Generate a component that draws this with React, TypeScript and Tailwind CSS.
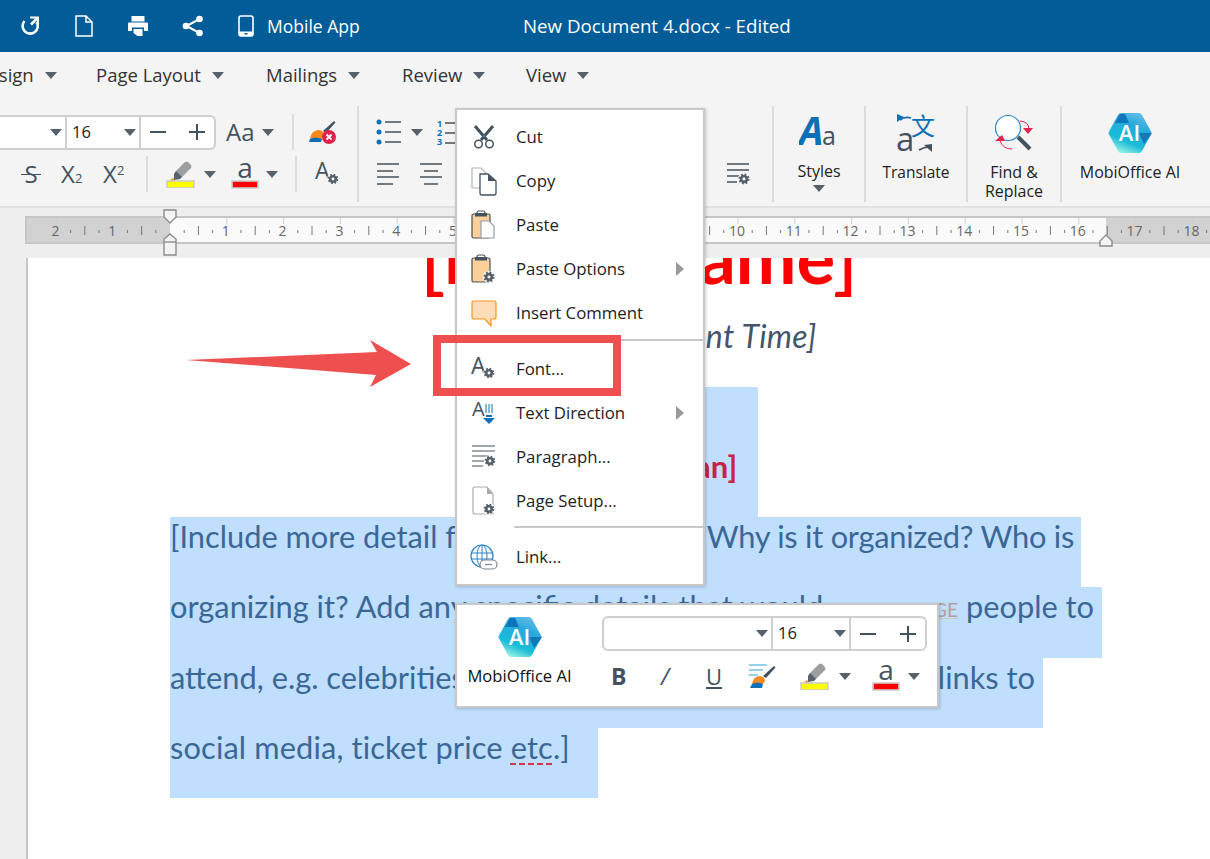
import React from "react";

function Caret({ className = "", color = "#56616b" }: { className?: string; color?: string }) {
  return (
    <svg width="12" height="7" viewBox="0 0 12 7" className={`shrink-0 ${className}`}>
      <polygon points="0,0 12,0 6,7" fill={color} />
    </svg>
  );
}

function Gear({ cx, cy, r = 3.6, color = "#56616b" }: { cx: number; cy: number; r?: number; color?: string }) {
  const tr = r * 1.15;
  const teeth = (2 * Math.PI * tr) / 16;
  return (
    <g>
      <circle cx={cx} cy={cy} r={r + 2.2} fill="#fff" opacity="0.85" />
      <circle cx={cx} cy={cy} r={r * 0.72} fill="none" stroke={color} strokeWidth={r * 0.7} />
      <circle cx={cx} cy={cy} r={tr} fill="none" stroke={color} strokeWidth={r * 0.5} strokeDasharray={`${teeth} ${teeth}`} />
    </g>
  );
}

function Hex({ id, w = 44, h = 40 }: { id: string; w?: number; h?: number }) {
  return (
    <svg width={w} height={h} viewBox="0 0 44 40">
      <defs>
        <linearGradient id={id} x1="0.25" y1="1" x2="0.7" y2="0">
          <stop offset="0" stopColor="#9ff5e2" />
          <stop offset="0.3" stopColor="#19bcd8" />
          <stop offset="0.7" stopColor="#29a9dc" />
          <stop offset="1" stopColor="#62bde6" />
        </linearGradient>
      </defs>
      <path d="M1 18.500 10 2Q11 0 13 0H31Q33 0 34 2L43 18.500Q44 20 43 21.500L34 38Q33 40 31 40H13Q11 40 10 38L1 21.500Q0 20 1 18.500Z" fill={`url(#${id})`} />
      <polygon points="12,1 17,1 21,10 7,10" fill="#0f76bb" />
      <polygon points="31,20 44,20 36,31" fill="#1477b8" />
      <text x="21.500" y="28" textAnchor="middle" fontFamily="Open Sans" fontWeight="600" fontSize="22" fill="#fff">AI</text>
    </svg>
  );
}

function HighlighterIcon() {
  return (
    <svg width="30" height="28" viewBox="0 0 30 28">
      <path d="M10 11 19 2q2-1 3 0l3 3q1 2 0 3l-9 9-7 1z" fill="#9b9fa1" />
      <path d="M10 11 16 17l-2 2-6 1 0-6z" fill="#56616b" />
      <polygon points="3,21 7,18 9,21" fill="#f7891f" />
      <rect x="1" y="21" width="27" height="7" fill="#ffff00" stroke="#cdcdcd" strokeWidth="1.600" />
    </svg>
  );
}

function FontColorIcon() {
  return (
    <svg width="28" height="30" viewBox="0 0 28 30">
      <text x="14" y="19" textAnchor="middle" fontFamily="Open Sans" fontSize="28" fill="#44525e">a</text>
      <rect x="1" y="22" width="26" height="7" fill="#ff0000" stroke="#cdcdcd" strokeWidth="1.600" />
    </svg>
  );
}

function FontBox({ w1, w2, w3, h, leftOpen }: { w1: number; w2: number; w3: number; h: number; leftOpen?: boolean }) {
  return (
    <div
      className={`flex shrink-0 items-center bg-white border-2 border-[#cfcfcf] ${leftOpen ? "rounded-r-md border-l-0" : "rounded-md"}`}
      style={{ height: h }}
    >
      <div className="flex items-center justify-end h-full pr-[3px]" style={{ width: w1 }}>
        <Caret />
      </div>
      <div className="flex items-center justify-between h-full border-l-2 border-[#cfcfcf] pl-[5px] pr-[3px] text-[16.500px] text-[#222]" style={{ width: w2 }}>
        <span>16</span>
        <Caret />
      </div>
      <div className="flex items-center justify-between h-full border-l-2 border-[#cfcfcf] px-[9px]" style={{ width: w3 }}>
        <div className="w-[16px] h-[2px] bg-[#44525e]" />
        <svg width="16" height="16" viewBox="0 0 16 16">
          <path d="M0 8H16M8 0V16" stroke="#44525e" strokeWidth="2" />
        </svg>
      </div>
    </div>
  );
}

function Sep({ className = "" }: { className?: string }) {
  return <div className={`w-[2px] shrink-0 bg-[#dcdcdc] ${className}`} />;
}

function TitleBar() {
  return (
    <div className="flex items-center h-[52px] shrink-0 bg-[#025c98] text-white">
      <svg width="20" height="20" viewBox="0 0 20 20" className="ml-[20px]" fill="none" stroke="#fff" strokeWidth="2.600">
        <path d="M4.500 5A7.600 7.600 0 1 0 16.600 6" />
        <path d="M10 1.500H18V9.500" strokeWidth="2" />
        <path d="M17.500 2 11 8.500" strokeWidth="2.600" />
      </svg>
      <svg width="18" height="22" viewBox="0 0 18 22" className="ml-[35px]" fill="none" stroke="#fff" strokeWidth="1.500">
        <path d="M1 1H11L17 7V21H1Z" />
        <path d="M11 1V7H17" />
      </svg>
      <svg width="20" height="20" viewBox="0 0 20 20" className="ml-[35px]" fill="#fff">
        <rect x="3.500" y="0" width="13" height="5.500" />
        <path d="M1 6.500H19a1 1 0 0 1 1 1V15H16V11.500H4V15H0V7.500a1 1 0 0 1 1-1Z" />
        <path d="M5.500 13H14.500V20H9.500L5.500 17Z" />
      </svg>
      <svg width="22" height="22" viewBox="0 0 22 22" className="ml-[34px]" fill="#fff" stroke="#fff">
        <path d="M17.500 4 4.500 11l13 7" fill="none" strokeWidth="2" />
        <circle cx="17.500" cy="4" r="3.300" stroke="none" />
        <circle cx="4" cy="11" r="3.300" stroke="none" />
        <circle cx="17.500" cy="18" r="3.300" stroke="none" />
      </svg>
      <svg width="16" height="22" viewBox="0 0 16 22" className="ml-[34px]" fill="none">
        <rect x="1" y="1" width="14" height="20" rx="2" stroke="#fff" strokeWidth="1.600" />
        <rect x="1" y="16.500" width="14" height="4.500" fill="#fff" />
        <rect x="6.500" y="18" width="3" height="1.500" fill="#025c98" />
      </svg>
      <span className="ml-[13px] text-[17.500px] w-[256px] whitespace-nowrap">Mobile App</span>
      <span className="text-[18.700px] whitespace-nowrap">New Document 4.docx - Edited</span>
    </div>
  );
}

const tabs = [
  { label: "Design", cls: "w-[121px] -ml-[25px]" },
  { label: "Page Layout", cls: "w-[170px]" },
  { label: "Mailings", cls: "w-[136px]" },
  { label: "Review", cls: "w-[124px]" },
  { label: "View", cls: "w-[80px]" },
];

function Tabs() {
  return (
    <div className="flex items-center h-[48px] shrink-0 bg-[#f4f4f4] text-[18.500px] text-[#333] pb-[2px]">
      {tabs.map((t) => (
        <div key={t.label} className={`flex items-center gap-[11px] shrink-0 whitespace-nowrap ${t.cls}`}>
          <span>{t.label}</span>
          <Caret />
        </div>
      ))}
    </div>
  );
}

function Ribbon() {
  return (
    <div className="flex h-[108px] shrink-0 bg-[#f4f4f4] border-b-2 border-[#e2e2e2] pt-[6px]">
      <div className="w-[357px] shrink-0 pt-[8px]">
        <div className="flex items-center h-[36px]">
          <div className="-ml-[10px]">
            <FontBox w1={75} w2={74} w3={75} h={35} leftOpen />
          </div>
          <span className="ml-[10px] text-[24px] text-[#44525e] leading-none">Aa</span>
          <Caret className="ml-[7px]" />
          <Sep className="h-[36px] ml-[18px]" />
          <svg width="28" height="26" viewBox="0 0 28 26" className="ml-[15px]">
            <path d="M14 12 25 2l1.500 1.500L17 14z" fill="#44525e" />
            <path d="M1 20q1-8 8-9 5 0 6 4l-2 5z" fill="#f7891f" />
            <path d="M1 20q5-3 12 0l-1 3H0z" fill="#0f6fb5" />
            <circle cx="20" cy="18" r="7" fill="#e0224d" />
            <path d="M17.500 15.500l5 5m0-5-5 5" stroke="#fff" strokeWidth="1.800" />
          </svg>
        </div>
        <div className="flex items-center h-[36px] mt-[6px] text-[#44525e]">
          <span className="relative ml-[22px] w-[18px] text-[24px] leading-none text-center">
            S
            <span className="absolute left-[-1px] right-[-1px] top-[12px] h-[1px] bg-[#44525e]" />
          </span>
          <span className="ml-[21px] w-[24px] text-[24px] leading-none whitespace-nowrap">
            X<span className="text-[13px]">2</span>
          </span>
          <span className="ml-[18px] w-[24px] text-[24px] leading-none whitespace-nowrap">
            X<span className="text-[13px] align-[8px]">2</span>
          </span>
          <Sep className="h-[36px] ml-[19px]" />
          <div className="ml-[18px]"><HighlighterIcon /></div>
          <Caret className="ml-[8px]" />
          <div className="ml-[15px]"><FontColorIcon /></div>
          <Caret className="ml-[7px]" />
          <Sep className="h-[36px] ml-[17px]" />
          <svg width="24" height="24" viewBox="0 0 24 24" className="ml-[18px]">
            <text x="0" y="17" fontFamily="Open Sans" fontSize="23" fill="#44525e">A</text>
            <Gear cx={18} cy={17} r={3.800} />
          </svg>
        </div>
      </div>
      <Sep className="h-[96px]" />
      <div className="w-[413px] shrink-0 pt-[8px]">
        <div className="flex items-center h-[36px]">
          <svg width="26" height="26" viewBox="0 0 26 26" className="ml-[17px]">
            <circle cx="3" cy="3" r="2.500" fill="#0f6fb5" />
            <circle cx="3" cy="13" r="2.500" fill="#0f6fb5" />
            <circle cx="3" cy="23" r="2.500" fill="#0f6fb5" />
            <path d="M9 3H25M9 13H25M9 23H25" stroke="#44525e" strokeWidth="1.400" />
          </svg>
          <Caret className="ml-[9px]" />
          <svg width="20" height="26" viewBox="0 0 20 26" className="ml-[14px]">
            <text x="0" y="8" fontFamily="Open Sans" fontWeight="700" fontSize="9" fill="#0f6fb5">1</text>
            <text x="0" y="17" fontFamily="Open Sans" fontWeight="700" fontSize="9" fill="#0f6fb5">2</text>
            <text x="0" y="26" fontFamily="Open Sans" fontWeight="700" fontSize="9" fill="#0f6fb5">3</text>
            <path d="M8 4H20M8 14H20M8 24H20" stroke="#44525e" strokeWidth="1.400" />
          </svg>
        </div>
        <div className="flex items-center h-[36px] mt-[6px]">
          <svg width="23" height="22" viewBox="0 0 23 22" className="ml-[18px]">
            <path d="M0 1H22M0 8H16M0 14H22M0 21H16" stroke="#44525e" strokeWidth="1.300" />
          </svg>
          <svg width="23" height="22" viewBox="0 0 23 22" className="ml-[20px]">
            <path d="M0 1H22M4 8H18M0 14H22M4 21H18" stroke="#44525e" strokeWidth="1.300" />
          </svg>
          <svg width="24" height="23" viewBox="0 0 24 23" className="ml-[283px]">
            <path d="M1 1H23M1 7H23M1 13H15M1 19H11" stroke="#44525e" strokeWidth="1.300" />
            <Gear cx={18} cy={16} r={4} />
          </svg>
        </div>
      </div>
      <Sep className="h-[96px]" />
      <div className="w-[90px] shrink-0 flex flex-col items-center text-[16px] text-[#222]">
        <svg width="40" height="32" viewBox="0 0 40 32" className="mt-[10px]">
          <text x="0" y="29" fontFamily="Open Sans" fontStyle="italic" fontWeight="700" fontSize="39" fill="#0f6fb5">A</text>
          <text x="23" y="29" fontFamily="Open Sans" fontSize="25" fill="#44525e">a</text>
        </svg>
        <span className="mt-[12px] leading-[22px]">Styles</span>
        <Caret className="mt-[3px]" />
      </div>
      <Sep className="h-[96px]" />
      <div className="w-[100px] shrink-0 flex flex-col items-center text-[15.500px] text-[#222]">
        <svg width="38" height="38" viewBox="0 0 38 38" className="mt-[8px]">
          <text x="14" y="21" fontFamily="Noto Sans CJK SC" fontSize="24" fill="#0f6fb5">文</text>
          <path d="M3 6q5-4 11-2" fill="none" stroke="#0f6fb5" strokeWidth="1.700" />
          <polygon points="0,1 7,4 0,9" fill="#0f6fb5" transform="translate(0 -1)" />
          <text x="-1" y="37" fontFamily="Open Sans" fontSize="33" fill="#44525e">a</text>
          <path d="M22 36q5-3 10-3" fill="none" stroke="#44525e" strokeWidth="1.700" />
          <polygon points="35,38 27,31 35,30" fill="#44525e" />
        </svg>
        <span className="mt-[9px] leading-[22px]">Translate</span>
      </div>
      <Sep className="h-[96px]" />
      <div className="w-[92px] shrink-0 flex flex-col items-center text-[16px] text-[#222]">
        <svg width="40" height="38" viewBox="0 0 40 38" className="mt-[8px]">
          <circle cx="14" cy="14" r="12.500" fill="#fff" stroke="#2b85c9" strokeWidth="1.200" />
          <path d="M24 23 36 35" stroke="#44525e" strokeWidth="4" />
          <path d="M26 7q9 1 9 8" fill="none" stroke="#e0224d" strokeWidth="1" />
          <polygon points="29,14 39,14 34,20" fill="#e0224d" />
          <path d="M6 27q3 8 12 8" fill="none" stroke="#e0224d" strokeWidth="1" />
          <polygon points="1,27 11,27 8,21" fill="#e0224d" />
        </svg>
        <span className="mt-[11px] leading-[19px] text-center whitespace-nowrap">Find &amp;<br />Replace</span>
      </div>
      <Sep className="h-[96px]" />
      <div className="flex-1 flex flex-col items-center text-[16px] text-[#222] pr-[12px]">
        <div className="mt-[7px] leading-[0]"><Hex id="hexTop" /></div>
        <span className="mt-[8px] leading-[22px] whitespace-nowrap">MobiOffice AI</span>
      </div>
    </div>
  );
}

function Ruler() {
  const unit = 56.8;
  const origin = 145;
  const nums = Array.from({ length: 22 }, (_, i) => i - 2);
  return (
    <div className="relative h-[50px] shrink-0 bg-[#eeeeee] pt-[8px] pl-[25px]">
      <div className="flex h-[28px] border-y-2 border-[#c6c6c6] border-l-2 bg-[#fafafa]">
        <div className="w-[143px] shrink-0 bg-[#d2d2d2]" />
        <div className="w-[936px] shrink-0" />
        <div className="flex-1 bg-[#d2d2d2]" />
      </div>
      <svg width="1185" height="50" viewBox="0 0 1185 50" className="absolute left-[25px] top-0">
        {nums.map((n) => {
          if (n === 0) return null;
          const x = origin + n * unit;
          return (
            <g key={n}>
              <path d={`M${x} 10V16`} stroke="#cfcfcf" strokeWidth="1" />
              <text x={x - 1} y="28" textAnchor="middle" fontFamily="Open Sans" fontSize="14" fill="#666">{Math.abs(n)}</text>
            </g>
          );
        })}
        {Array.from({ length: 88 }, (_, i) => i - 8).map((q) => {
          if (q % 4 === 0) return null;
          const x = origin + (q * unit) / 4;
          const tall = q % 2 === 0;
          return <path key={q} d={tall ? `M${x} 18V27` : `M${x} 22V25`} stroke="#777" strokeWidth="1" />;
        })}
        <path d="M139 2H151V9L145 15 139 9Z" fill="#f4f4f4" stroke="#8c8c8c" strokeWidth="1.400" />
        <path d="M145 26 151 31V47H139V31Z" fill="#f4f4f4" stroke="#8c8c8c" strokeWidth="1.400" />
        <path d="M139 34H151" stroke="#8c8c8c" strokeWidth="1.400" />
        <path d="M1081 27 1087 33V38H1075V33Z" fill="#f4f4f4" stroke="#8c8c8c" strokeWidth="1.400" />
      </svg>
    </div>
  );
}

function Document() {
  const line = "h-[70.300px] flex items-center justify-between bg-[#c0dffe] whitespace-nowrap overflow-hidden pb-[30px]";
  const clip = "flex-1 min-w-0 overflow-hidden";
  return (
    <div className="flex flex-1 min-h-0 overflow-hidden bg-white">
      <div className="w-[26px] shrink-0 bg-[#eeeeee]" />
      <div className="w-[2px] shrink-0 bg-[#c6c6c6]" />
      <div className="flex-1 pl-[142px] text-[#3b6796] font-['Lato']">
        <div className="w-[938px] flex flex-col items-center">
          <div className="h-[52px] flex items-end">
            <div className="text-[72.500px] font-bold text-[#ff0000] leading-[86px] whitespace-nowrap mb-[11px]">
              <span className="text-[88px] font-normal leading-[0] -mx-[3px]">[</span>
              Event Name
              <span className="text-[88px] font-normal leading-[0] -mx-[3px]">]</span>
            </div>
          </div>
          <div className="mt-[5px] h-[42px] text-[32px] tracking-[0.3px] italic text-[#44546a] leading-[42px] whitespace-nowrap">[Event Date &amp; Event Time]</div>
          <div className="mt-[30px] w-[238px] h-[130px] bg-[#c0dffe] flex justify-center pt-[58px]">
            <span className="text-[31px] font-bold text-[#c4264a] leading-[42px] whitespace-nowrap">[Event Slogan]</span>
          </div>
        </div>
        <div className="text-[30.800px]">
          <div className={`${line} w-[911px] pr-[7px]`}>
            <span className={clip}>[Include more detail for</span>
            <span className="shrink-0 tracking-[-0.25px]">Why is it organized? Who is</span>
          </div>
          <div className={`${line} w-[932px] pr-[8px]`}>
            <span className={clip}>organizing it? Add any specific details that would</span>
            <span className="shrink-0 flex items-center gap-[8px]">
              <span className="mt-[6px] text-[19px] text-[#b59e9a] underline decoration-[#c9c9c9]">ENCOURAGE</span>
              <span>people to</span>
            </span>
          </div>
          <div className={`${line} w-[873px] pr-[8px]`}>
            <span className={clip}>attend, e.g. celebrities</span>
            <span className="shrink-0">links to</span>
          </div>
          <div className={`${line} w-[428px]`}>
            <span className="tracking-[0.13px]">
              social media, ticket price{" "}
              <span className="underline decoration-dashed decoration-[#d9344f] decoration-[1.500px] underline-offset-[5px]">etc</span>
              .]
            </span>
          </div>
        </div>
      </div>
    </div>
  );
}

function MenuRow({ icon, label, sub }: { icon: React.ReactNode; label: string; sub?: boolean }) {
  return (
    <div className="flex items-center h-[44px] pl-[12px] pr-[19px] text-[16.800px] text-[#222]">
      <div className="w-[30px] h-[28px] flex items-center justify-center shrink-0">{icon}</div>
      <span className="ml-[17px] flex-1 whitespace-nowrap">{label}</span>
      {sub && (
        <svg width="8" height="14" viewBox="0 0 8 14"><polygon points="0,0 8,7 0,14" fill="#9a9a9a" /></svg>
      )}
    </div>
  );
}

function ClipBoard({ gear }: { gear?: boolean }) {
  return (
    <svg width="26" height="30" viewBox="0 0 26 30">
      <rect x="1" y="4" width="18" height="24" rx="1.500" fill="#fdd09b" stroke="#44525e" strokeWidth="1.200" />
      <path d="M6 5V2.500Q6 1 8 1H12Q14 1 14 2.500V5Z" fill="#fff" stroke="#44525e" strokeWidth="1.200" />
      <rect x="4" y="3" width="12" height="3.500" fill="#44525e" />
      {gear ? (
        <Gear cx={18} cy={23} r={4} />
      ) : (
        <path d="M10 11H18L23 16V28H10Z" fill="#fff" stroke="#9a9fa3" strokeWidth="1.200" />
      )}
    </svg>
  );
}

function ContextMenu() {
  return (
    <div className="absolute left-[455px] top-[108px] w-[250px] h-[478px] bg-white border-[2.500px] border-[#c8c8c8] shadow-[1px_1px_3px_rgba(0,0,0,0.2)] pt-[5px]">
      <MenuRow label="Cut" icon={
        <svg width="22" height="24" viewBox="0 0 22 24" fill="none">
          <path d="M2 1 14 15" stroke="#44525e" strokeWidth="3" />
          <path d="M20 1 8 15" stroke="#44525e" strokeWidth="3" />
          <circle cx="5.500" cy="19" r="3.800" stroke="#44525e" strokeWidth="1.500" />
          <circle cx="16.500" cy="19" r="3.800" stroke="#44525e" strokeWidth="1.500" />
          <circle cx="11" cy="11" r="1" fill="#2b9bd8" />
        </svg>
      } />
      <MenuRow label="Copy" icon={
        <svg width="27" height="29" viewBox="0 0 27 29" fill="none">
          <path d="M1 1H10L15 6V21H1Z" stroke="#b0b4b7" strokeWidth="1.200" fill="#fff" />
          <path d="M9 7H17L25 14V26Q25 28 23 28H11Q9 28 9 26Z" fill="#fff" stroke="#44525e" strokeWidth="1.300" />
          <path d="M17 7 25 14H17Z" fill="#44525e" />
        </svg>
      } />
      <MenuRow label="Paste" icon={<ClipBoard />} />
      <MenuRow label="Paste Options" sub icon={<ClipBoard gear />} />
      <MenuRow label="Insert Comment" icon={
        <svg width="26" height="27" viewBox="0 0 26 27">
          <path d="M3 1H23Q25 1 25 3V17Q25 19 23 19H20V26L14 19H3Q1 19 1 17V3Q1 1 3 1Z" fill="#fddcb8" stroke="#f7941d" strokeWidth="1.200" />
        </svg>
      } />
      <div className="h-[12px] flex items-start pt-[4px] pl-[57px]"><div className="w-full h-[2px] bg-[#c8c8c8]" /></div>
      <MenuRow label="Font..." icon={
        <svg width="26" height="24" viewBox="0 0 26 24">
          <text x="0" y="17" fontFamily="Open Sans" fontSize="23" fill="#44525e">A</text>
          <Gear cx={18} cy={16} r={3.800} />
        </svg>
      } />
      <MenuRow label="Text Direction" sub icon={
        <svg width="24" height="24" viewBox="0 0 24 24">
          <text x="0" y="15" fontFamily="Open Sans" fontSize="20" fill="#44525e">A</text>
          <path d="M14 3V12M17 3V12M20 3V12" stroke="#0f6fb5" strokeWidth="1" />
          <path d="M14 15H20" stroke="#0f6fb5" strokeWidth="2" />
          <polygon points="11,17 23,17 17,23" fill="#0f6fb5" />
        </svg>
      } />
      <MenuRow label="Paragraph..." icon={
        <svg width="26" height="24" viewBox="0 0 26 24">
          <path d="M1 1H24M1 6H24M1 11H18M1 16H13M1 21H12" stroke="#44525e" strokeWidth="1.200" />
          <Gear cx={19} cy={16} r={3.800} />
        </svg>
      } />
      <MenuRow label="Page Setup..." icon={
        <svg width="24" height="30" viewBox="0 0 24 30">
          <path d="M3 1H15L21 8V28H3Q1 28 1 26V3Q1 1 3 1Z" fill="#fff" stroke="#a8acaf" strokeWidth="1.200" />
          <path d="M15 1 21 8H15Z" fill="#a8acaf" />
          <Gear cx={17} cy={23} r={3.800} />
        </svg>
      } />
      <div className="h-[12px] flex items-start pt-[3px] pl-[57px]"><div className="w-full h-[2px] bg-[#c8c8c8]" /></div>
      <MenuRow label="Link..." icon={
        <svg width="28" height="26" viewBox="0 0 28 26" fill="none">
          <circle cx="12" cy="12" r="11" stroke="#2b85c9" strokeWidth="1.200" />
          <ellipse cx="12" cy="12" rx="5" ry="11" stroke="#2b85c9" strokeWidth="1" />
          <path d="M1 9H23M1 15H23M12 1V23" stroke="#2b85c9" strokeWidth="1" />
          <rect x="10" y="16" width="17" height="9" rx="4.500" fill="#fff" stroke="#7b858d" strokeWidth="1.200" />
          <path d="M15 20.500H22" stroke="#7b858d" strokeWidth="1.200" />
        </svg>
      } />
    </div>
  );
}

function MiniToolbar() {
  return (
    <div className="absolute left-[455px] top-[603px] w-[484px] h-[105px] bg-white border-[2.500px] border-[#c8c8c8] shadow-[1px_1px_3px_rgba(0,0,0,0.2)] flex pt-[11px]">
      <div className="w-[125px] mr-[20px] shrink-0 flex flex-col items-center">
        <div className="leading-[0] mt-[1px]"><Hex id="hexMini" /></div>
        <span className="mt-[7px] text-[16.600px] font-medium text-[#111] whitespace-nowrap">MobiOffice AI</span>
      </div>
      <div className="flex flex-col">
        <FontBox w1={167} w2={78} w3={76} h={35} />
        <div className="flex items-center h-[36px] mt-[7px] text-[#44525e]">
          <span className="ml-[9px] w-[16px] text-[23px] font-bold leading-none">B</span>
          <span className="ml-[34px] w-[10px] text-[23px] italic leading-none">/</span>
          <span className="ml-[35px] w-[18px] text-[22px] underline leading-none underline-offset-2">U</span>
          <svg width="28" height="26" viewBox="0 0 28 26" className="ml-[25px]">
            <path d="M0 2H18M0 7H14M0 12H9" stroke="#2ba3dc" strokeWidth="1.200" />
            <path d="M14 13 25 3l1.500 1.500L17 15z" fill="#44525e" />
            <path d="M3 21q1-7 7-8 6 0 6 5l-2 3z" fill="#f7891f" />
            <path d="M3 21q5-3 11 0l-1 4H1z" fill="#0f6fb5" />
          </svg>
          <div className="ml-[23px]"><HighlighterIcon /></div>
          <Caret className="ml-[9px]" />
          <div className="ml-[21px]"><FontColorIcon /></div>
          <Caret className="ml-[8px]" />
        </div>
      </div>
    </div>
  );
}

export default function App() {
  return (
    <div className="relative w-[1210px] h-[859px] overflow-hidden flex flex-col bg-white font-['Open_Sans',sans-serif]">
      <TitleBar />
      <Tabs />
      <Ribbon />
      <Ruler />
      <Document />
      <ContextMenu />
      <MiniToolbar />
      <div className="absolute left-[433px] top-[335px] w-[188px] h-[61px] border-[8px] border-[#ee5050]" />
      <svg width="230" height="50" viewBox="0 0 230 50" className="absolute left-[185px] top-[339px]">
        <polygon points="1,21 192,13 185,1 226,25 185,48 191,36" fill="#ee5050" />
      </svg>
    </div>
  );
}
